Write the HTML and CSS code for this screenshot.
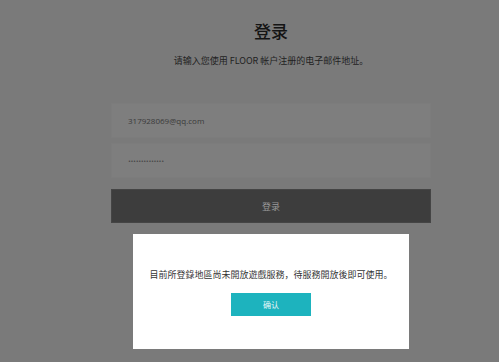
FILE: index.html
```html
<!DOCTYPE html>
<html lang="zh">
<head>
<meta charset="utf-8">
<link rel="stylesheet" href="styles.css">
</head>
<body>
<main class="page">
  <h1 class="title">登录</h1>
  <p class="subtitle">请输入您使用 FLOOR 帐户注册的电子邮件地址。</p>
  <form class="form">
    <div class="field">317928069@qq.com</div>
    <div class="field field-pass">••••••••••••••</div>
    <div class="submit">登录</div>
  </form>
  <div class="modal">
    <p class="modal-text">目前所登錄地區尚未開放遊戲服務，待服務開放後即可使用。</p>
    <div class="confirm">确认</div>
  </div>
</main>
</body>
</html>
```

FILE: styles.css
```css
html, body {
  margin: 0;
  padding: 0;
  background: #7a7a7a;
  font-family: "Noto Sans CJK SC", "Noto Sans", sans-serif;
}
.page {
  position: relative;
  width: 320px;
  height: 362px;
  margin-left: 111px;
  display: flex;
  flex-direction: column;
  align-items: center;
}
.title {
  margin: 19px 0 0;
  font-size: 17px;
  line-height: 24px;
  font-weight: 500;
  color: #141414;
}
.subtitle {
  margin: 12px 0 0;
  font-size: 9px;
  line-height: 12px;
  color: #222;
}
.form {
  margin-top: 36px;
  width: 320px;
  display: flex;
  flex-direction: column;
}
.field {
  height: 35px;
  box-sizing: border-box;
  background: #7e7e7e;
  border: 1px solid #7c7c7c;
  padding-left: 16px;
  display: flex;
  align-items: center;
  font-family: "Open Sans", "Liberation Sans", sans-serif;
  font-size: 8px;
  color: #3a3a3a;
}
.field-pass {
  margin-top: 5px;
  font-family: "DejaVu Sans", sans-serif;
  font-size: 5px;
  letter-spacing: -0.4px;
  color: #3a3a3a;
}
.submit {
  margin-top: 11px;
  height: 34px;
  background: #3d3d3d;
  border: 1px solid #454545;
  box-sizing: border-box;
  display: flex;
  align-items: center;
  justify-content: center;
  font-size: 9px;
  color: #9a9a9a;
}
.modal {
  position: absolute;
  left: 22px;
  top: 234px;
  width: 276px;
  height: 115px;
  background: #fff;
  display: flex;
  flex-direction: column;
  align-items: center;
}
.modal-text {
  margin: 35px 0 0;
  font-size: 9px;
  line-height: 12px;
  color: #333;
  white-space: nowrap;
}
.confirm {
  margin-top: 12px;
  width: 80px;
  height: 23px;
  background: #1db3be;
  display: flex;
  align-items: center;
  justify-content: center;
  font-size: 8px;
  color: #e8f8f9;
}
```
